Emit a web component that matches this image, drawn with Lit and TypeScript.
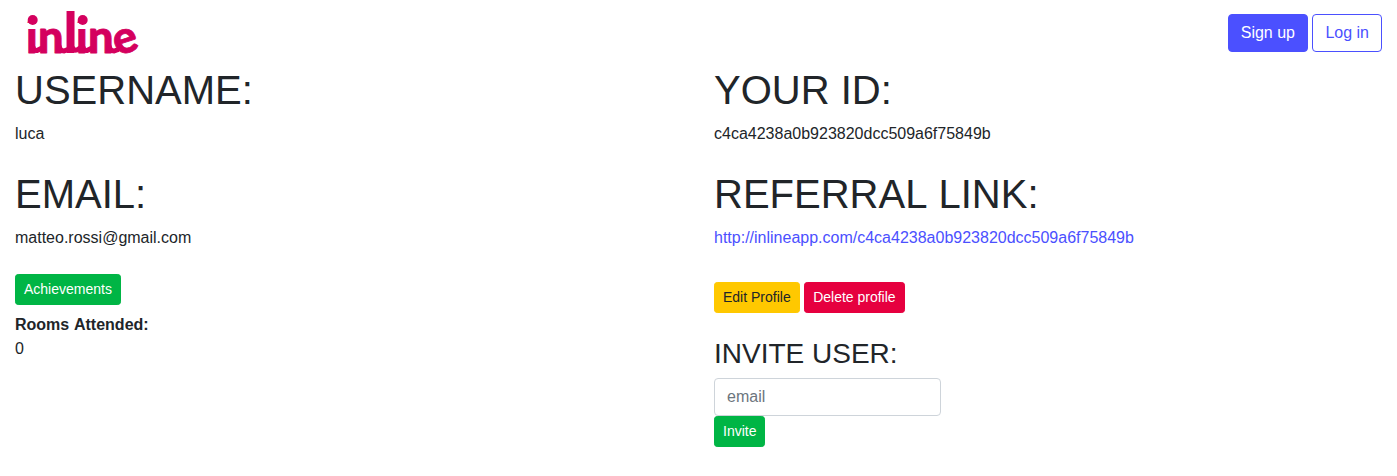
import { LitElement, html, css } from "lit";
import { customElement } from "lit/decorators.js";

@customElement("inline-logo")
export class InlineLogo extends LitElement {
  static styles = css`
    :host { display: block; width: 125px; height: 66px; }
    svg { display: block; }
    .word {
      font-family: Lato, "Open Sans", sans-serif;
      font-weight: 900;
      font-size: 45px;
      fill: #d4005e;
      stroke: #d4005e;
      stroke-width: 0.8;
      stroke-linejoin: round;
    }
    .tall { font-family: "Liberation Sans", Arial, sans-serif; font-weight: 700; font-size: 58px; stroke-width: 0; }
    .dot { fill: #d4005e; }
    .gap { fill: #fff; }
    .join { fill: none; stroke: #d4005e; stroke-width: 5; stroke-linecap: round; }
  `;

  render() {
    return html`
      <svg width="125" height="66" viewBox="0 0 125 66" role="img" aria-label="inline">
        <text class="word" y="53"><tspan x="6">i</tspan><tspan x="18">n</tspan><tspan class="tall" x="42.500">l</tspan><tspan x="56">i</tspan><tspan x="68">n</tspan></text>
        <text class="word" x="93.500" y="53" transform="rotate(-18 105 42)">e</text>
        <rect class="gap" x="6.500" y="23" width="12.500" height="6" />
        <rect class="gap" x="56" y="23" width="13" height="6" />
        <circle class="dot" cx="12.700" cy="20" r="5" />
        <circle class="dot" cx="62.700" cy="20" r="5" />
        <path class="join" d="M13 47q1 4 4 3.500l4-2M39 46q1 5 5 5l5-2M52 47q2 4 5 3l3-2M63 47q1 4 4 3.500l4-2M89 46q1 5 5 5l3-1" />
      </svg>
    `;
  }
}

@customElement("app-root")
export class AppRoot extends LitElement {
  static styles = css`
    :host {
      display: block;
      height: 476px;
      overflow: hidden;
      background: #fff;
      color: #212529;
      font: 16px/24px "Liberation Sans", Arial, sans-serif;
    }
    * { box-sizing: border-box; }
    header { display: flex; justify-content: space-between; height: 66px; padding: 0 15px 0 20px; }
    .actions { display: flex; gap: 4.45px; padding-top: 14px; }
    .columns { display: grid; grid-template-columns: 699px 1fr; }
    .column { padding: 0 15px; }
    h1, h3 { margin: 0 0 8px; font-weight: 400; line-height: 1.2; }
    h1 { font-size: 40px; }
    h3 { margin-bottom: 7.4px; font-size: 28px; }
    .referral { word-spacing: 1.5px; }
    p { margin: 0 0 24px; }
    a { color: #4b50ff; text-decoration: none; }
    .btn {
      display: block;
      height: 38px;
      padding: 6px 12px;
      border: 1px solid transparent;
      border-radius: 4px;
      font: 16px/24px "Liberation Sans", Arial, sans-serif;
      white-space: nowrap;
    }
    .small { height: 31px; padding: 4px 8px; border-radius: 3.2px; font-size: 14px; line-height: 21px; }
    .primary { background: #4b50ff; border-color: #4b50ff; color: #fff; }
    .outline { background: #fff; border-color: #4b50ff; color: #4b50ff; }
    .success { background: #00b545; border-color: #00b545; color: #fff; }
    .warning { background: #ffc800; border-color: #ffc800; color: #212529; }
    .danger { background: #e6003f; border-color: #e6003f; color: #fff; }
    .rooms { padding-top: 7.5px; word-spacing: 0.9px; }
    .manage { display: flex; gap: 4.45px; padding: 8px 0 24px; }
    input {
      display: block;
      width: 227px;
      height: 38px;
      padding: 6px 12px;
      border: 1px solid #ced4da;
      border-radius: 4px;
      background: #fff;
      font: 16px/24px "Liberation Sans", Arial, sans-serif;
    }
    input::placeholder { color: #6c757d; opacity: 1; }
  `;

  render() {
    return html`
      <header>
        <inline-logo></inline-logo>
        <div class="actions">
          <button class="btn primary">Sign up</button>
          <button class="btn outline">Log in</button>
        </div>
      </header>
      <main class="columns">
        <section class="column">
          <h1>USERNAME:</h1>
          <p>luca</p>
          <h1>EMAIL:</h1>
          <p>matteo.rossi@gmail.com</p>
          <button class="btn small success">Achievements</button>
          <div class="rooms"><b>Rooms Attended:</b><div>0</div></div>
        </section>
        <section class="column">
          <h1>YOUR ID:</h1>
          <p>c4ca4238a0b923820dcc509a6f75849b</p>
          <h1 class="referral">REFERRAL LINK:</h1>
          <p><a href="#">http://inlineapp.com/c4ca4238a0b923820dcc509a6f75849b</a></p>
          <div class="manage">
            <button class="btn small warning">Edit Profile</button>
            <button class="btn small danger">Delete profile</button>
          </div>
          <h3>INVITE USER:</h3>
          <input type="email" placeholder="email" />
          <button class="btn small success">Invite</button>
        </section>
      </main>
    `;
  }
}
